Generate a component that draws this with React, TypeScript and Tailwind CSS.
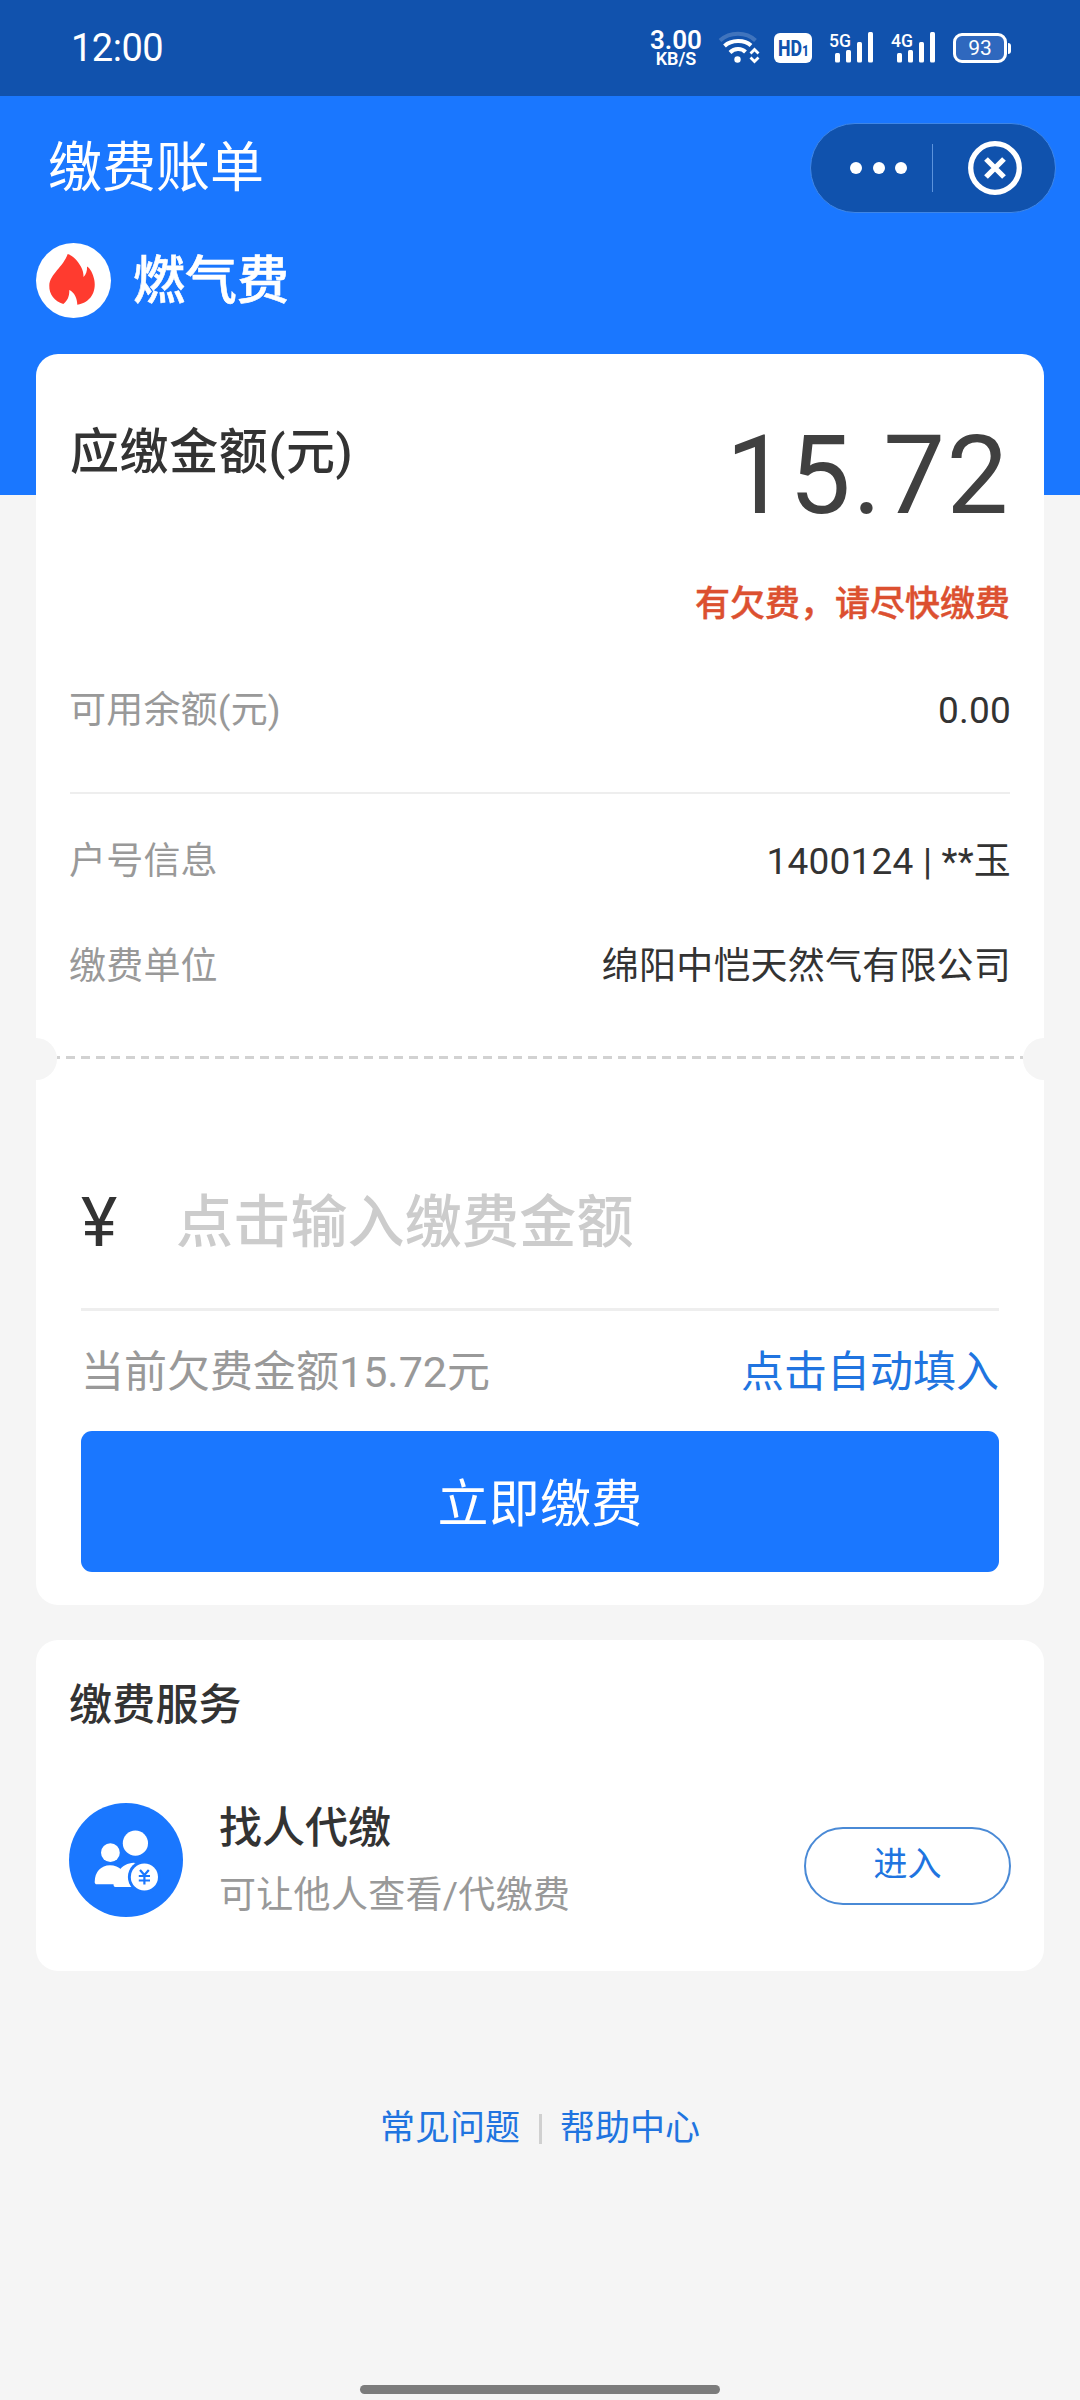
import type { ReactNode } from 'react';

function SignalIcon({ label }: { label: string }) {
  return (
    <svg className="overflow-visible" width="46" height="34" viewBox="0 0 46 34" fill="white">
      <text x="0" y="15.500" fontSize="19" fontWeight="500" textLength="22" lengthAdjust="spacingAndGlyphs">{label}</text>
      <rect x="6" y="22" width="5" height="9.500" rx="1.500" />
      <rect x="17" y="19" width="5" height="12.500" rx="1.500" />
      <rect x="28" y="11" width="5" height="20.500" rx="1.500" />
      <rect x="39" y="1" width="5" height="30.500" rx="1.500" />
    </svg>
  );
}

function WifiIcon() {
  return (
    <svg width="42" height="34" viewBox="0 0 42 34" fill="none" stroke="white" strokeWidth="4">
      <path d="M2 9.500C12 0.500 28 0.500 37.500 9.500" opacity="0.2" />
      <path d="M6.500 15C13.500 8.500 26.500 8.500 33 14.500" />
      <path d="M12 21.500C16.500 17 23.500 17 27.500 21" />
      <circle cx="19.500" cy="28.500" r="3.200" fill="white" stroke="none" />
      <path d="M32.500 22.500L36.500 18.500L40.500 22.500M32.500 26.500L36.500 30.500L40.500 26.500" strokeWidth="2.800" />
    </svg>
  );
}

function StatusBar() {
  return (
    <div className="flex h-24 items-center bg-[#1152ad] pl-[71px] text-white">
      <span className="text-[38px] leading-[96px] tracking-[-0.5px]">12:00</span>
      <div className="ml-auto mr-[69px] flex h-[34px] items-center">
        <div className="mr-[16px] flex w-[52px] flex-col items-center font-semibold">
          <span className="h-5 text-[26px] leading-[20px]">3.00</span>
          <span className="h-[17px] text-[18px] leading-[18px]">KB/S</span>
        </div>
        <WifiIcon />
        <div className="ml-[14px] mr-[17px] flex h-[30px] w-[38px] items-center justify-center rounded-[6px] bg-white text-[#1152ad]">
          <svg width="38" height="30" viewBox="0 0 38 30" fill="currentColor">
            <text x="4" y="23" fontSize="22" fontWeight="800" textLength="31" lengthAdjust="spacingAndGlyphs">
              HD<tspan fontSize="15">1</tspan>
            </text>
          </svg>
        </div>
        <SignalIcon label="5G" />
        <div className="w-4" />
        <SignalIcon label="4G" />
        <div className="ml-4 flex h-[30px] w-[54px] items-center justify-center rounded-[9px] border-[3px] border-white bg-[#2f68be] text-[21px] leading-6">
          93
        </div>
        <div className="ml-px h-[11px] w-[3px] rounded-r bg-white" />
      </div>
    </div>
  );
}

function Capsule() {
  return (
    <div className="flex h-[90px] w-[246px] items-center rounded-full border border-[#3f86e6] bg-[#1052ad]">
      <div className="ml-[39px] flex gap-[10.500px]">
        <i className="size-3 rounded-full bg-white" />
        <i className="size-3 rounded-full bg-white" />
        <i className="size-3 rounded-full bg-white" />
      </div>
      <div className="ml-[25px] h-12 w-px bg-[#5c93dc]" />
      <svg className="-mt-px ml-[35px]" width="54" height="54" viewBox="0 0 54 54" fill="none" stroke="white" strokeWidth="5.300">
        <circle cx="27" cy="27" r="24.300" />
        <path d="M18 18L36 36M36 18L18 36" />
      </svg>
    </div>
  );
}

function FlameIcon() {
  return (
    <div className="flex size-[75px] items-center justify-center rounded-full bg-white">
      <svg width="75" height="75" viewBox="0 0 75 75" fill="#ff3b2f">
        <path d="M31.700 11C36.500 12.300 41.500 17.500 45 23.700C47 27.500 47.500 30.500 47.500 34C50 31.500 51.300 28 51 23.500C54 24.800 57 30.500 58.300 37C60.500 49 54.500 59.500 41.300 61.800C41.300 55.500 38.500 49.500 33.300 47C33.500 53.500 31.500 57.500 27.300 61C18.500 58.500 13 51 13.300 42.500C13.600 31.500 27.500 23.500 31.700 11Z" />
      </svg>
    </div>
  );
}

function PeopleIcon() {
  return (
    <svg width="114" height="114" viewBox="0 0 114 114">
      <circle cx="57" cy="57" r="57" fill="#1a77ff" />
      <g fill="white">
        <circle cx="41.400" cy="49.700" r="9.400" />
        <circle cx="66.400" cy="40.200" r="12.600" />
        <path d="M44.500 81H46C45 72 52 60 65 59.700L72 62V84H46.500C45 84 44.500 83 44.500 81Z" />
        <path d="M25.700 79C25.700 69 32 62.300 41 62.300C50 62.300 58 69 58 81.300H28C26.500 81.300 25.700 80.500 25.700 79Z" />
      </g>
      <circle cx="75.400" cy="74" r="16.500" fill="#1a77ff" />
      <circle cx="75.400" cy="74" r="13.600" fill="white" />
      <path d="M71 67L75.400 72L79.800 67M75.400 72V81.500M69.800 73H81M69.800 77.500H81" stroke="#1a77ff" strokeWidth="2.200" fill="none" />
    </svg>
  );
}

function InfoRow({ label, children, className }: { label: string; children: ReactNode; className: string }) {
  return (
    <div className={`flex justify-between px-[33px] text-[37px] leading-[50px] tracking-[0.2px] ${className}`}>
      <span className="text-[#999]">{label}</span>
      <span className="text-[#333]">{children}</span>
    </div>
  );
}

function BillCard() {
  return (
    <section className="rounded-[22px] bg-white pb-[33px]">
      <div className="flex justify-between px-[34px] pt-16">
        <h2 className="text-[49px] font-medium leading-[70px] tracking-[0.6px] text-[#333]">应缴金额(元)</h2>
        <div className="mt-[3px] text-[110px] leading-[110px] tracking-[1.600px] text-[#404040]">15.72</div>
      </div>
      <p className="mt-[49px] pr-[34px] text-right text-[35px] font-medium leading-[50px] text-[#dc5030] [-webkit-text-stroke:0.4px_#dc5030]">有欠费，请尽快缴费</p>
      <InfoRow label="可用余额(元)" className="mt-[56px]">0.00</InfoRow>
      <div className="mx-[34px] mt-14 h-0.5 bg-[#eee]" />
      <InfoRow label="户号信息" className="mt-[43px]">1400124 | **玉</InfoRow>
      <InfoRow label="缴费单位" className="mt-[55px]">绵阳中恺天然气有限公司</InfoRow>

      {/* Ticket tear line */}
      <div className="mt-[46px] flex h-[42px]">
        <div className="w-[21px] rounded-r-full bg-[#f5f5f5]" />
        <div className="mt-[18px] h-[3px] flex-1 bg-[repeating-linear-gradient(90deg,#d2d2d2_0_3px,transparent_3px_9px,#d2d2d2_9px_14.907px)]" />
        <div className="w-[21px] rounded-l-full bg-[#f5f5f5]" />
      </div>

      <div className="px-[45px]">
        <div className="mt-[108px] flex leading-[70px]">
          <span className="w-[95px] text-[69px] text-[#333]">¥</span>
          <span className="text-[57px] font-medium tracking-[0.200px] text-[#ccc]">点击输入缴费金额</span>
        </div>
        <div className="mt-[50px] h-[3px] bg-[#eee]" />
        <div className="mt-9 flex justify-between text-[43px] leading-[50px]">
          <span className="text-[#999]">当前欠费金额15.72元</span>
          <a className="text-[#2074e0]">点击自动填入</a>
        </div>
        <button className="mt-[34px] h-[141px] w-full rounded-[11px] bg-[#1a77ff] pt-2 text-[51px] tracking-[0.300px] text-white">立即缴费</button>
      </div>
    </section>
  );
}

function ServiceCard() {
  return (
    <section className="mt-[35px] h-[331px] rounded-[22px] bg-white px-[33px] pt-10">
      <h3 className="text-[43px] font-medium leading-[50px] tracking-[0.200px] text-[#333]">缴费服务</h3>
      <div className="mt-[73px] flex">
        <PeopleIcon />
        <div className="ml-9 flex flex-col gap-[18px] leading-[50px]">
          <span className="text-[43px] font-medium text-[#333]">找人代缴</span>
          <span className="text-[37px] tracking-[0.300px] text-[#999]">可让他人查看/代缴费</span>
        </div>
        <button className="ml-auto mt-6 h-[78px] w-[207px] rounded-full border-2 border-[#4a8ad6] pb-1 text-[34px] text-[#2074e0]">
          进入
        </button>
      </div>
    </section>
  );
}

export default function App() {
  return (
    <div className="flex h-[2400px] w-[1080px] flex-col bg-[#f5f5f5] font-[Roboto,'Noto_Sans_CJK_SC',sans-serif]">
      <StatusBar />
      <header className="h-[399px] bg-[#1a77ff] text-white">
        <div className="flex items-center justify-between pl-[48px] pr-6 pt-[27px]">
          <h1 className="pt-0.5 text-[54px] leading-[88px]">缴费账单</h1>
          <Capsule />
        </div>
        <div className="mt-[30px] flex items-center pl-9">
          <FlameIcon />
          <span className="ml-[22px] pt-0.5 text-[52px] font-medium leading-[73px] [-webkit-text-stroke:0.6px_white]">燃气费</span>
        </div>
      </header>

      <main className="-mt-[141px] px-9">
        <BillCard />
        <ServiceCard />
      </main>

      <footer className="mt-[133px] flex items-center justify-center text-[35px] leading-[50px] text-[#2074e0]">
        <a>常见问题</a>
        <div className="ml-[19px] mr-[18px] h-[30px] w-[3px] bg-[#d0d0d0]" />
        <a>帮助中心</a>
      </footer>

      <div className="mx-auto mb-1.5 mt-auto h-[9px] w-[360px] rounded-full bg-[#7c7c7c]" />
    </div>
  );
}
